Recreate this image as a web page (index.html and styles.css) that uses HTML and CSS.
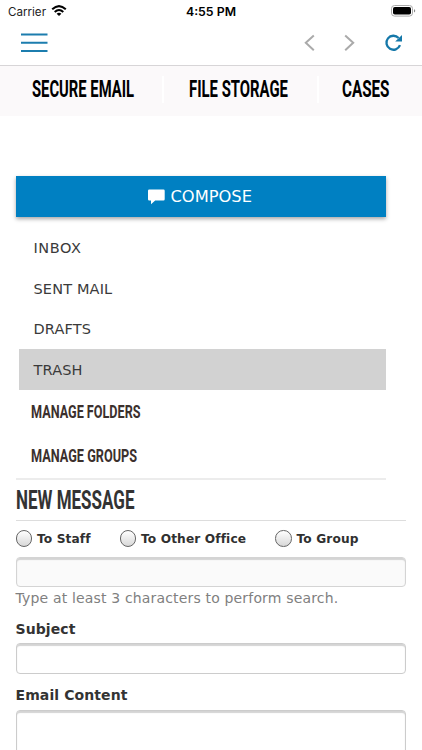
FILE: index.html
```html
<!DOCTYPE html>
<html lang="en">
<head>
<meta charset="utf-8">
<title>Secure Email</title>
<link rel="stylesheet" href="styles.css">
</head>
<body>
<header class="top">
  <div class="status">
    <div class="carrier"><svg width="43" height="18"><text x="0" y="11.5" textLength="38" lengthAdjust="spacingAndGlyphs">Carrier</text></svg></div>
    <svg class="wifi" width="16" height="12" viewBox="0 0 16 12"><path d="M1.2 4.3Q8-2.1 14.8 4.3M3.7 7Q8 3 12.3 7" fill="none" stroke="#000" stroke-width="2"/><path d="M8 11L5.6 8.7Q8 6.8 10.4 8.7Z"/></svg>
    <svg class="time" width="52" height="18"><text x="0" y="11.5" textLength="50" lengthAdjust="spacingAndGlyphs">4:55 PM</text></svg>
    <svg class="battery" width="26" height="12" viewBox="0 0 26 12"><rect x=".5" y=".5" width="21" height="10.6" rx="3" fill="none" stroke="#aaa"/><rect x="2" y="2" width="18" height="7.6" rx="1.8"/><path d="M23 4Q25.5 5.8 23 7.6Z" fill="#888"/></svg>
  </div>
  <nav class="toolbar">
    <svg class="menu" width="27" height="20" viewBox="0 0 27 20"><path d="M0 1.5H26.5M0 9.7H26.5M0 18H26.5" stroke="#1c7dae" stroke-width="2"/></svg>
    <svg class="back" width="11" height="18" viewBox="0 0 11 18"><path d="M9.8 1.5L1.8 8.8L9.8 16.2" fill="none" stroke="#aaa" stroke-width="2"/></svg>
    <svg class="forward" width="11" height="18" viewBox="0 0 11 18"><path d="M1.2 1.5L9.2 8.8L1.2 16.2" fill="none" stroke="#aaa" stroke-width="2"/></svg>
    <svg class="reload" width="18" height="18" viewBox="0 0 18 18"><path d="M13.6 4A7 7 0 1 0 15 11.2" fill="none" stroke="#1578a9" stroke-width="2.3"/><path d="M17 1V7.6H10.2Z" fill="#1578a9"/></svg>
  </nav>
</header>
<nav class="tabs">
  <svg class="tab-email" width="104" height="30"><text x="0" y="18" textLength="102" lengthAdjust="spacingAndGlyphs">SECURE EMAIL</text></svg>
  <i class="sep"></i>
  <svg class="tab-files" width="101" height="30"><text x="0" y="18" textLength="99" lengthAdjust="spacingAndGlyphs">FILE STORAGE</text></svg>
  <i class="sep sep-two"></i>
  <svg class="tab-cases" width="49" height="30"><text x="0" y="18" textLength="47.5" lengthAdjust="spacingAndGlyphs">CASES</text></svg>
</nav>
<main>
  <section class="side">
    <div class="compose"><svg width="17" height="16" viewBox="0 0 17 16"><path d="M1.2 .5H15.5Q16.7 .5 16.7 1.7V10.2Q16.7 11.4 15.5 11.4H7.2L3 15.2V11.4H1.2Q0 11.4 0 10.2V1.7Q0 .5 1.2 .5Z" fill="#fff"/></svg><span>COMPOSE</span></div>
    <ul class="folders">
      <li class="inbox">INBOX</li>
      <li>SENT MAIL</li>
      <li>DRAFTS</li>
      <li class="active">TRASH</li>
    </ul>
    <div class="manage"><svg width="112" height="26"><text x="0" y="18" textLength="109.5" lengthAdjust="spacingAndGlyphs">MANAGE FOLDERS</text></svg></div>
    <div class="manage"><svg width="112" height="26"><text x="0" y="18" textLength="106" lengthAdjust="spacingAndGlyphs">MANAGE GROUPS</text></svg></div>
  </section>
  <h1><svg width="124" height="32"><text x="0" y="23" textLength="118.5" lengthAdjust="spacingAndGlyphs">NEW MESSAGE</text></svg></h1>
  <div class="radios">
    <label class="staff"><i></i>To Staff</label>
    <label class="office"><i></i>To Other Office</label>
    <label><i></i>To Group</label>
  </div>
  <div class="field search"></div>
  <p class="hint">Type at least 3 characters to perform search.</p>
  <div class="label">Subject</div>
  <div class="field"></div>
  <div class="label content-label">Email Content</div>
  <div class="field editor"></div>
</main>
</body>
</html>
```
FILE: styles.css
```css
* { box-sizing: border-box; }
html { overflow: hidden; }
body { margin: 0; width: 422px; height: 750px; overflow: hidden; background: #fff; color: #333; font-family: "DejaVu Sans", sans-serif; }
svg { display: block; flex: none; overflow: visible; }
.top { height: 66px; border-bottom: 1px solid #d7d5d7; }
.status { height: 22px; display: flex; align-items: flex-start; padding: 4px 0 0 7.5px; font-family: Inter, sans-serif; font-size: 11.5px; }
.carrier { width: 43.5px; }
.carrier text { fill: #222; }
.wifi { margin-top: .5px; }
.time { margin-left: 118.5px; font-weight: 600; }
.battery { margin: .7px 0 0 153px; }
.toolbar { display: flex; align-items: flex-start; padding: 11px 0 0 20.5px; }
.back { margin: 1px 0 0 256px; }
.forward { margin: 1px 0 0 29px; }
.reload { margin: .8px 0 0 30px; }
.tabs { height: 50px; display: flex; align-items: flex-start; padding: 13px 0 0 32px; background: #fbf9fa; font: 700 23px Roboto, sans-serif; }
.sep { width: 2px; height: 27px; margin: -3px 24.5px 0 26px; background: #fff; }
.sep-two { margin: -3px 23px 0 27px; }
main { padding: 60px 16px 0 15.5px; }
.side { width: 370.5px; height: 303.5px; border-bottom: 2px solid #ececec; }
.compose { height: 41px; display: flex; align-items: center; justify-content: center; gap: 5.5px; padding-right: 1.5px; background: #0080c2; color: #fff; font-size: 16.3px; box-shadow: 0 2px 4px rgba(0, 0, 0, .35); }
.folders { list-style: none; margin: 11px 0 0 3px; padding: 0; }
.folders li { height: 40.7px; padding-left: 15px; line-height: 41px; font-size: 14.5px; letter-spacing: .15px; color: #3a3a3a; }
.folders .inbox { letter-spacing: .55px; }
.folders .active { margin-top: -.6px; line-height: 42px; background: #d2d2d2; }
.manage { height: 43.8px; padding: 10px 0 0 15px; font: 700 19.2px Roboto, sans-serif; }
.manage text { fill: #3b302d; }
h1 { margin: 0; height: 41px; padding-top: 6.5px; border-bottom: 1px solid #ddd; font: 700 25.2px Roboto, sans-serif; }
h1 text { fill: #333; }
.radios { display: flex; height: 36px; align-items: center; font-size: 12.2px; font-weight: 700; color: #303030; }
.radios label { display: flex; align-items: center; gap: 5px; white-space: nowrap; letter-spacing: .12px; }
.radios i { width: 16.5px; height: 16.5px; border: 1px solid #666; border-radius: 50%; background: linear-gradient(#fff, #d8d8d8); }
.staff { width: 104px; }
.office { width: 155.5px; }
.field { height: 30.5px; border: 1px solid #ccc; border-radius: 4px; box-shadow: inset 0 2px 1px #d4d4d4; }
.search { background: #fafafa; border-color: #d4d4d4; }
.hint { margin: 1px 0 0; height: 20px; line-height: 20px; font-size: 14px; letter-spacing: .165px; color: #808080; white-space: nowrap; }
.label { height: 35px; padding-top: 11.5px; line-height: 18px; font-size: 14px; font-weight: 700; letter-spacing: .1px; }
.content-label { height: 36px; padding-top: 12px; }
.editor { height: 60px; }
```
